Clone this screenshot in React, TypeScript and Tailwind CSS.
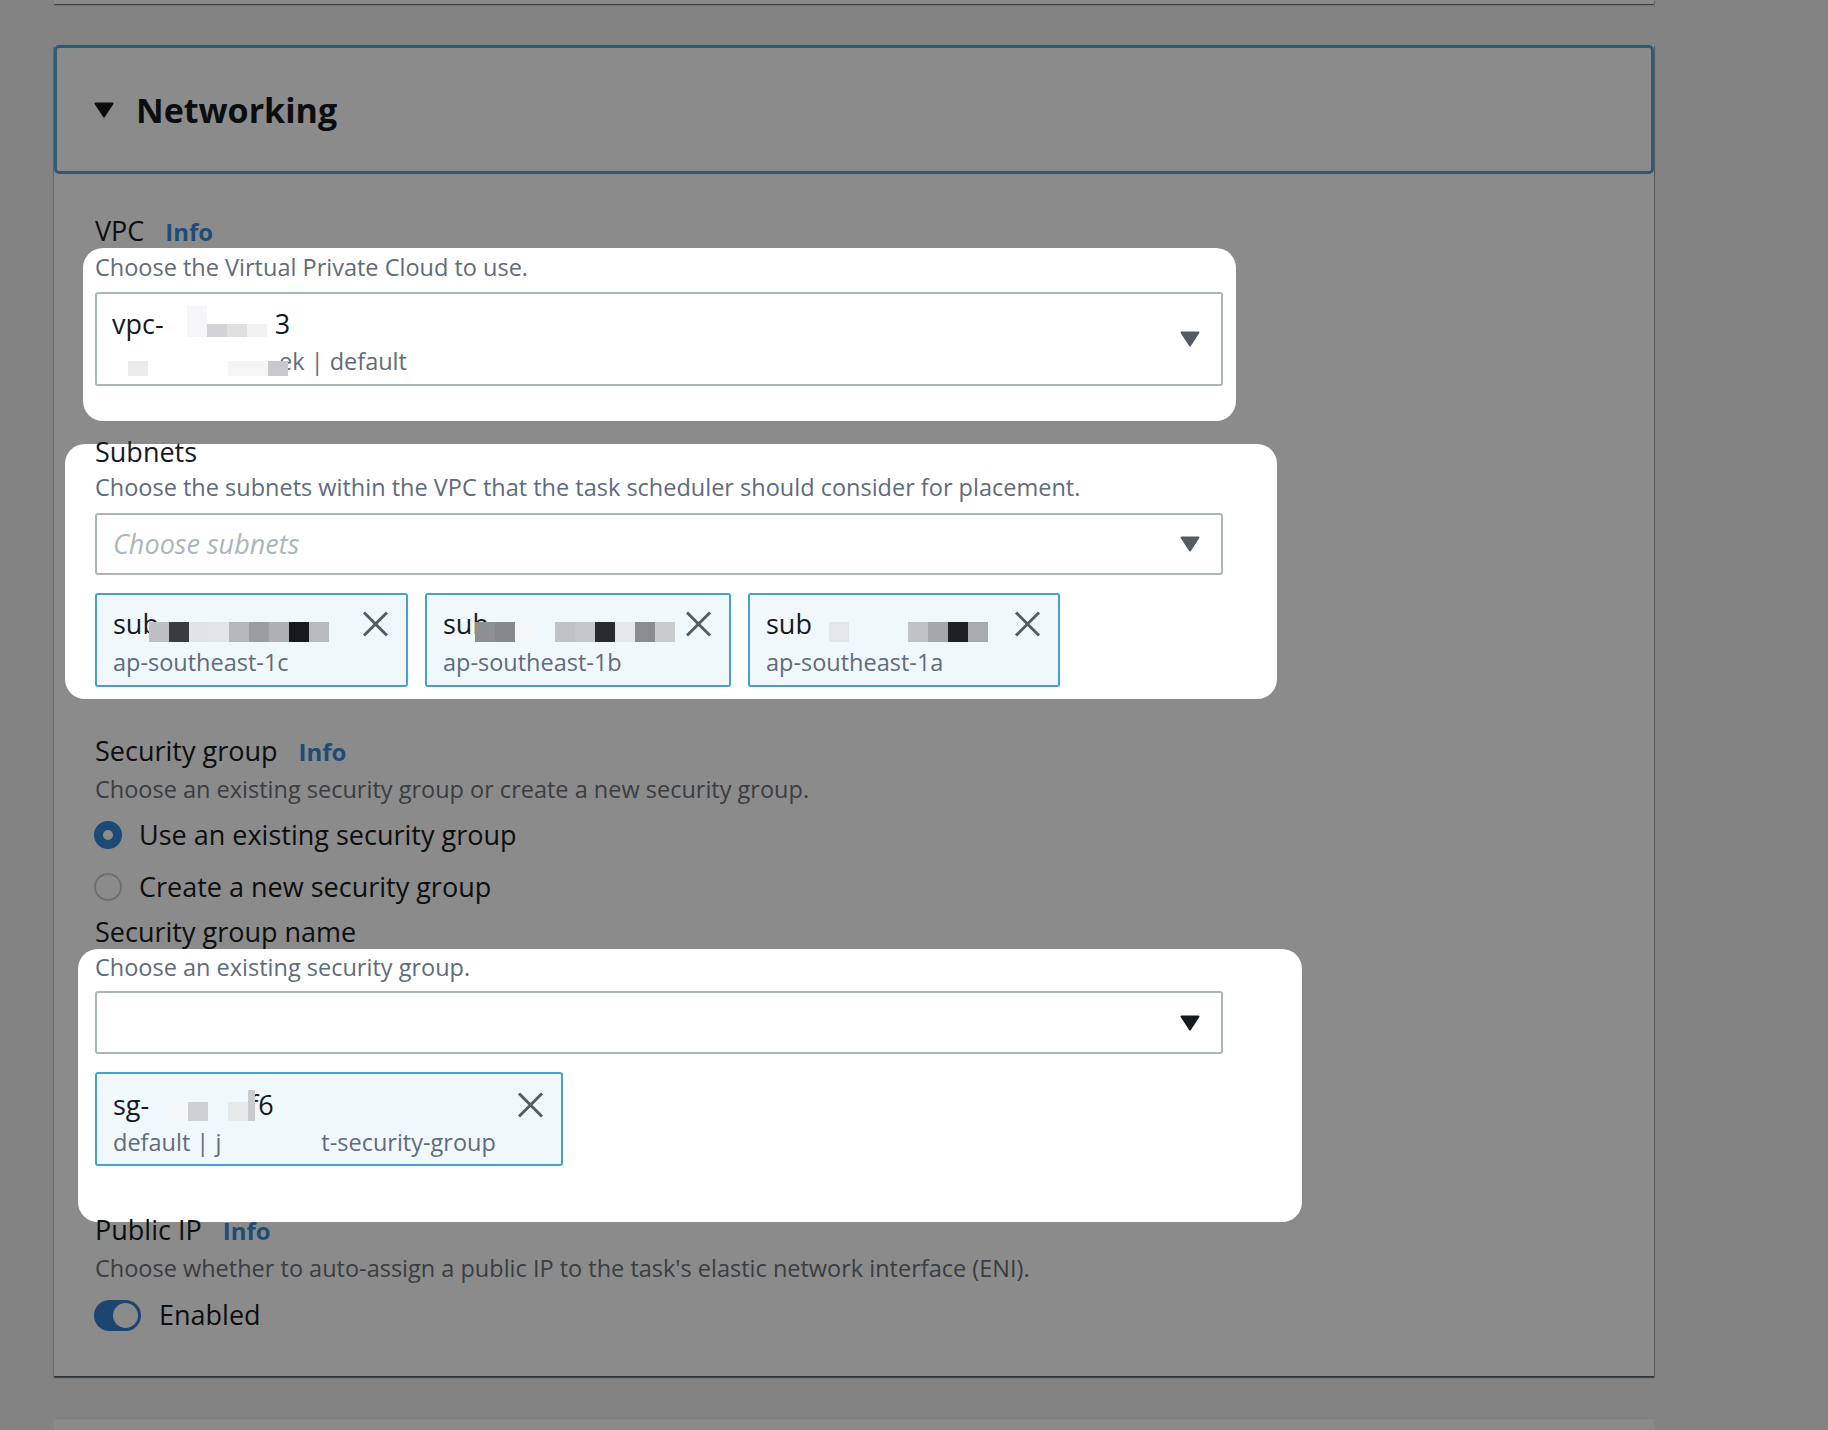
import React from "react";

function Caret({ className }: { className?: string }) {
  return (
    <svg width="20" height="16" viewBox="0 0 20 16" className={className}>
      <polygon
        points="1.5,1.5 18.5,1.5 10,14.5"
        fill="currentColor"
        stroke="currentColor"
        strokeWidth="2"
        strokeLinejoin="round"
      />
    </svg>
  );
}

function Dismiss() {
  return (
    <svg width="27" height="26" viewBox="0 0 27 26" className="text-[#545b64]">
      <path d="M2 1.5 25 24.5M25 1.5 2 24.5" stroke="currentColor" strokeWidth="3" fill="none" />
    </svg>
  );
}

// pixelated redaction squares, one class string per square
function Px({ tones }: { tones: string[] }) {
  return (
    <>
      {tones.map((t, i) => (
        <span key={i} className={`relative z-[1] inline-block ${t}`} />
      ))}
    </>
  );
}

function Token({
  width,
  first,
  second,
  roomy,
}: {
  width: string;
  first: React.ReactNode;
  second: React.ReactNode;
  roomy?: boolean;
}) {
  return (
    <div
      className={`${width} h-[94px] shrink-0 flex justify-between rounded-[3px] border-2 border-[#46a2cb] bg-[#f1f8fc] pl-[16px] pr-[17px] ${
        roomy ? "pt-[16px]" : "pt-[14px]"
      }`}
    >
      <div>
        <div className="whitespace-nowrap text-[27px] leading-[30px] text-[#16191f]">{first}</div>
        <div
          className={`whitespace-nowrap text-[23.5px] leading-[28px] text-[#5f6b7a] ${roomy ? "mt-[7px]" : "mt-[6px]"}`}
        >
          {second}
        </div>
      </div>
      <div className="flex h-[30px] items-center">
        <Dismiss />
      </div>
    </div>
  );
}

function Label({ text, info, tight }: { text: string; info?: boolean; tight?: boolean }) {
  return (
    <div
      className={`flex items-baseline gap-[21px] text-[27px] text-[#0d0e10] ${
        tight ? "leading-[16px]" : "leading-[30px]"
      }`}
    >
      <span>{text}</span>
      {info && <span className="text-[24px] font-bold text-[#1e4c78]">Info</span>}
    </div>
  );
}

const sq = "w-[20px] h-[20px] align-[-8px]";

export default function App() {
  return (
    <div className="h-[1430px] w-[1828px] overflow-hidden bg-[#838383] font-['Open_Sans',sans-serif]">
      <div className="ml-[54px] h-[4px] w-[1600px] bg-[#8b8b8b] shadow-[0_1px_1px_0_rgba(0,10,20,0.5),1px_1px_1px_0_rgba(0,10,20,0.2)]" />

      <section className="ml-[54px] mt-[41px] h-[1331px] w-[1600px] bg-[#8b8b8b] shadow-[0_2px_1px_0_rgba(0,10,20,0.45),1px_1px_1px_0_rgba(0,10,20,0.25),-1px_1px_1px_0_rgba(0,10,20,0.15)]">
        <div className="flex h-[129px] items-center rounded-[5px] border-[3px] border-[#2c5b78] pl-[37px]">
          <Caret className="text-[#0c0d0f]" />
          <h2 className="ml-[22px] text-[34px] font-bold leading-[40px] text-[#0c0d0f]">Networking</h2>
        </div>

        <div className="pl-[41px]">
          <div className="mt-[42px]">
            <Label text="VPC" info />
          </div>

          <div className="ml-[-12px] mt-[1px] w-[1153px] rounded-[20px] bg-white pb-[35px] pl-[12px] pt-[7px]">
            <p className="text-[23.5px] leading-[24px] text-[#5f6b7a]">Choose the Virtual Private Cloud to use.</p>
            <div className="mt-[13px] flex h-[94px] w-[1128px] items-center justify-between rounded-[3px] border-2 border-[#aab7b8] pl-[15px] pr-[21px]">
              <div className="self-start pt-[12px]">
                <div className="whitespace-nowrap text-[27px] leading-[30px] text-[#16191f]">
                  vpc-
                  <span className="ml-[23px]" />
                  <Px
                    tones={[
                      "w-[20px] h-[31px] align-[-3px] bg-[#f6f6f8]",
                      "w-[20px] h-[13px] align-[-3px] bg-[#d3d3d7]",
                      "w-[20px] h-[13px] align-[-3px] bg-[#e0e0e3]",
                      "w-[20px] h-[13px] align-[-3px] bg-[#f2f2f4]",
                    ]}
                  />
                  <span className="ml-[8px]">3</span>
                </div>
                <div className="mt-[8px] whitespace-nowrap text-[23.5px] leading-[28px] text-[#5f6b7a]">
                  <span className="ml-[16px]" />
                  <Px
                    tones={[
                      "w-[20px] h-[15px] align-[-6px] bg-[#ececef]",
                      "w-[80px] h-[15px] align-[-6px] bg-transparent",
                      "w-[40px] h-[15px] align-[-6px] bg-[#f5f5f7]",
                      "w-[20px] h-[15px] align-[-6px] bg-[#c8c8cc]",
                    ]}
                  />
                  <span className="ml-[-9px]">ek | default</span>
                </div>
              </div>
              <Caret className="text-[#545b64]" />
            </div>
          </div>

          <div className="ml-[-30px] mt-[23px] w-[1212px] rounded-[20px] bg-white pb-[12px] pl-[30px]">
            <div className="text-[27px] leading-[16px] text-[#16191f]">Subnets</div>
            <p className="mt-[15px] text-[23.5px] leading-[24px] text-[#5f6b7a]">
              Choose the subnets within the VPC that the task scheduler should consider for placement.
            </p>
            <div className="mt-[14px] flex h-[62px] w-[1128px] items-center justify-between rounded-[3px] border-2 border-[#aab7b8] pl-[16px] pr-[21px]">
              <span className="text-[27px] italic leading-[32px] text-[#aab7b8]">Choose subnets</span>
              <Caret className="text-[#545b64]" />
            </div>
            <div className="mt-[18px] flex gap-[17px]">
              <Token
                width="w-[313px]"
                first={
                  <>
                    sub
                    <span className="ml-[-10px]" />
                    <Px
                      tones={[
                        `${sq} bg-[#bcc0c2]`,
                        `${sq} bg-[#3a3b3e]`,
                        `${sq} bg-[#dfe4e6]`,
                        `${sq} bg-[#e1e6e8]`,
                        `${sq} bg-[#b4b8ba]`,
                        `${sq} bg-[#9a9ea0]`,
                        `${sq} bg-[#aeb1b3]`,
                        `${sq} bg-[#17181c]`,
                        `${sq} bg-[#b8bbbd]`,
                      ]}
                    />
                  </>
                }
                second="ap-southeast-1c"
              />
              <Token
                width="w-[306px]"
                first={
                  <>
                    sub
                    <span className="ml-[-14px]" />
                    <Px
                      tones={[
                        `${sq} bg-[#8d9092]`,
                        `${sq} bg-[#86898b]`,
                        `${sq} bg-[#f3f6f7]`,
                        `${sq} bg-transparent`,
                        `${sq} bg-[#c0c3c5]`,
                        `${sq} bg-[#c4c7c9]`,
                        `${sq} bg-[#2a2b2e]`,
                        `${sq} bg-[#e4e8ea]`,
                        `${sq} bg-[#8a8d8f]`,
                        `${sq} bg-[#c9cccd]`,
                      ]}
                    />
                  </>
                }
                second="ap-southeast-1b"
              />
              <Token
                width="w-[312px]"
                first={
                  <>
                    sub
                    <span className="ml-[17px]" />
                    <Px
                      tones={[
                        `${sq} bg-[#e3e7e9]`,
                        "w-[59px] h-[20px] align-[-8px] bg-transparent",
                        `${sq} bg-[#c0c3c5]`,
                        `${sq} bg-[#a5a8aa]`,
                        `${sq} bg-[#1f2023]`,
                        `${sq} bg-[#a8abad]`,
                      ]}
                    />
                  </>
                }
                second="ap-southeast-1a"
              />
            </div>
          </div>

          <div className="mt-[37px]">
            <Label text="Security group" info />
          </div>
          <p className="mt-[10px] text-[23.5px] leading-[24px] text-[#3a3d41]">
            Choose an existing security group or create a new security group.
          </p>
          <div className="mt-[18px] flex h-[32px] items-center gap-[17px]">
            <span className="ml-[-1px] h-[28px] w-[28px] rounded-full border-[9px] border-[#1c4a74] bg-[#8b8b8b]" />
            <span className="text-[27px] leading-[32px] text-[#0d0e10]">Use an existing security group</span>
          </div>
          <div className="mt-[20px] flex h-[32px] items-center gap-[17px]">
            <span className="ml-[-1px] h-[28px] w-[28px] rounded-full border-2 border-[#6c7075]" />
            <span className="text-[27px] leading-[32px] text-[#0d0e10]">Create a new security group</span>
          </div>
          <div className="mt-[14px]">
            <Label text="Security group name" />
          </div>

          <div className="ml-[-17px] mt-[2px] w-[1224px] rounded-[20px] bg-white pb-[56px] pl-[17px] pt-[4px]">
            <p className="text-[23.5px] leading-[28px] text-[#5f6b7a]">Choose an existing security group.</p>
            <div className="mt-[10px] flex h-[63px] w-[1128px] items-center justify-end rounded-[3px] border-2 border-[#aab7b8] pr-[21px]">
              <Caret className="text-[#16191f]" />
            </div>
            <div className="mt-[18px]">
              <Token
                width="w-[468px]"
                roomy
                first={
                  <>
                    sg-
                    <span className="ml-[19px]" />
                    <Px
                      tones={[
                        "w-[20px] h-[19px] align-[-6px] bg-[#f5f6f7]",
                        "w-[20px] h-[19px] align-[-6px] bg-[#cdd0d2]",
                        "w-[20px] h-[19px] align-[-6px] bg-transparent",
                        "w-[20px] h-[19px] align-[-6px] bg-[#e7eaeb]",
                        "w-[7px] h-[31px] align-[-6px] bg-[#c9cccd]",
                      ]}
                    />
                    <span className="ml-[-6px]">f6</span>
                  </>
                }
                second={
                  <>
                    default | j<span className="inline-block w-[100px]" />t-security-group
                  </>
                }
              />
            </div>
          </div>

          <Label text="Public IP" info tight />
          <p className="mt-[15px] text-[23.5px] leading-[28px] text-[#3a3d41]">
            Choose whether to auto-assign a public IP to the task's elastic network interface (ENI).
          </p>
          <div className="mt-[17px] flex h-[32px] items-center gap-[18px]">
            <span className="ml-[-1px] flex h-[31px] w-[47px] items-center justify-end rounded-full bg-[#1c4570] pr-[3px]">
              <span className="h-[25px] w-[25px] rounded-full bg-[#8b8b8b]" />
            </span>
            <span className="text-[27px] leading-[32px] text-[#0d0e10]">Enabled</span>
          </div>
        </div>
      </section>

      <div className="ml-[54px] mt-[42px] h-[12px] w-[1600px] border-t border-[#7d7d7d] bg-[#8b8b8b]" />
    </div>
  );
}
